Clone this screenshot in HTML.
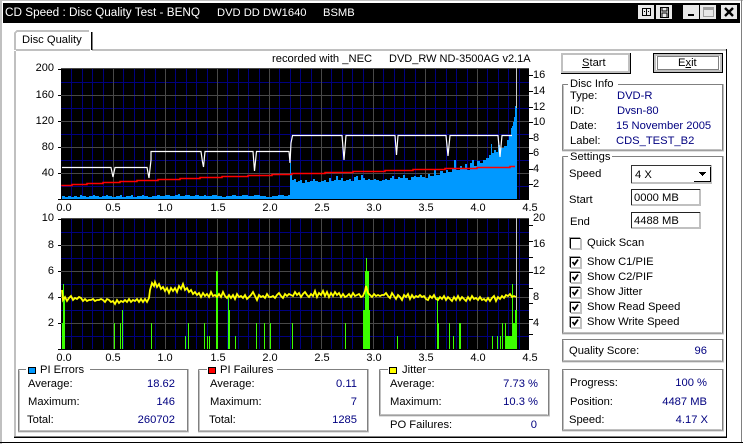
<!DOCTYPE html>
<html><head><meta charset="utf-8"><style>
html,body{margin:0;padding:0;background:#fff}
#w{position:relative;width:743px;height:444px;overflow:hidden;background:#fff;font:11.2px/14px "Liberation Sans",sans-serif;color:#000}
svg{position:absolute;left:0;top:0}
.t{position:absolute;white-space:nowrap}
.r{position:absolute;white-space:nowrap;text-align:right}
.b{color:#000080}
.a{font-size:11px;width:30px;text-align:center;position:absolute}
.l{font-size:11px;width:24px;text-align:right;position:absolute;left:30px}
.ck{position:absolute;left:570px;width:9px;height:9px;border:1px solid #000;border-right-color:#c0c0c0;border-bottom-color:#c0c0c0;box-shadow:-1px -1px 0 #a0a0a0,1px 1px 0 #c0c0c0;background:#fff}
</style></head><body><div id="w">
<svg width="743" height="444" shape-rendering="crispEdges">
<defs><g id="gr" fill="none">
<path stroke="#000080" d="M61 82.5H529M61 108.5H529M61 134.5H529M61 160.5H529M61 186.5H529M71.5 68V199M82.5 68V199M92.5 68V199M103.5 68V199M123.5 68V199M134.5 68V199M144.5 68V199M155.5 68V199M175.5 68V199M186.5 68V199M196.5 68V199M207.5 68V199M227.5 68V199M238.5 68V199M248.5 68V199M259.5 68V199M279.5 68V199M290.5 68V199M300.5 68V199M311.5 68V199M331.5 68V199M342.5 68V199M352.5 68V199M363.5 68V199M383.5 68V199M394.5 68V199M404.5 68V199M415.5 68V199M435.5 68V199M446.5 68V199M456.5 68V199M467.5 68V199M487.5 68V199M498.5 68V199M508.5 68V199M519.5 68V199"/>
<path stroke="#484848" d="M61 68.5H529M61 95.5H529M61 121.5H529M61 147.5H529M61 173.5H529M113.5 68V199M165.5 68V199M217.5 68V199M269.5 68V199M321.5 68V199M373.5 68V199M425.5 68V199M477.5 68V199"/>
<path stroke="#000" d="M58 69.5H61M58 95.5H61M58 121.5H61M58 147.5H61M58 173.5H61M58 199.5H61M529 75.5H533M529 91.5H533M529 107.5H533M529 122.5H533M529 138.5H533M529 153.5H533M529 169.5H533M529 184.5H533"/>
</g></defs>
<!-- window frame -->
<rect x="0" y="0" width="743" height="1" fill="#c0c0c0"/>
<rect x="0" y="0" width="2" height="444" fill="#c0c0c0"/>
<rect x="741" y="0" width="1" height="443" fill="#808080"/>
<rect x="3" y="3" width="737" height="20" fill="#000"/>
<rect x="0" y="442" width="743" height="1" fill="#000"/>
<!-- title buttons -->
<rect x="638" y="5" width="16" height="14" fill="#e8e8e8"/><rect x="656" y="5" width="16" height="14" fill="#e8e8e8"/>
<rect x="683" y="5" width="16" height="14" fill="#e8e8e8"/><rect x="700" y="5" width="16" height="14" fill="#e8e8e8"/><rect x="721" y="5" width="16" height="14" fill="#e8e8e8"/>
<path d="M642 8.5H650M642 15.5H650M642.5 8V16M646.5 8V16M650.5 8V16M644 11.5H645M648 11.5H649M660.5 7.5H668.5V17.5H660.5ZM662 8V11H667V8M662 17V13H667V17" fill="none" stroke="#000"/>
<rect x="688" y="14" width="6" height="2" fill="#000"/>
<rect x="703.5" y="7.5" width="10" height="9" fill="#e8e8e8" stroke="#a0a0a0"/><rect x="704" y="8" width="9" height="2" fill="#a0a0a0"/>
<path d="M725 8L733 16M733 8L725 16" stroke="#000" stroke-width="2.4" shape-rendering="auto"/>
<!-- tab page -->
<path d="M15 51V437" stroke="#c0c0c0" stroke-width="2" />
<path d="M16 50H90M92 50H726" stroke="#c0c0c0" stroke-width="2"/>
<path d="M726.5 49V437" stroke="#000" /><path d="M14 437.5H727" stroke="#000"/><path d="M14 436.5H726" stroke="#808080"/>
<path d="M15 50V33L17 31H89" fill="none" stroke="#c0c0c0" stroke-width="2"/>
<path d="M91.5 32V50" stroke="#000" stroke-width="1.5"/>
<!-- charts -->
<rect x="61" y="68" width="468" height="132" fill="#000"/>
<rect x="61" y="218" width="468" height="132" fill="#000"/>
<use href="#gr"/><use href="#gr" y="150"/>
<!-- chart 1 blue -->
<path fill="#0099ff" d="M62 199V196H65V197H68V196H71V197H74V196H77V197H80V195H82V196H86V197H89V196H93V195H95V196H99V197H102V196H106V195H108V196H112V197H116V196H120V195H122V197H126V196H131V195H133V197H137V196H142V195H144V196H148V197H152V196H157V195H160V196H165V195H170V196H175V195H178V194H180V196H185V195H190V196H195V195H199V196H204V195H206V196H212V195H217V196H222V197H226V196H232V195H236V196H242V195H248V196H254V195H260V196H266V197H272V196H278V195H284V196H288V195H290V163H291V173H292V180H294V179H296V182H298V181H300V180H302V183H305V180H307V182H310V181H313V179H315V181H318V182H321V181H324V180H326V182H329V178H331V181H334V180H336V176H338V180H341V178H343V181H346V180H349V179H351V181H354V177H356V176H358V180H361V175H363V178H365V180H368V179H370V180H374V179H376V180H379V181H382V180H385V179H387V180H390V178H392V176H394V179H398V177H400V178H403V175H405V178H408V180H411V177H414V176H416V177H420V175H422V177H425V178H428V174H430V176H434V170H436V175H440V171H443V173H446V170H448V172H452V169H454V160H456V170H460V166H462V168H465V164H467V170H470V163H472V160H474V166H477V161H480V163H483V160H486V158H489V155H491V144H492V153H494V150H496V152H498V145H500V148H502V148H504V146H507V140H509V136H511V128H512V126H513V122H514V117H515V106H516V99H517V199Z"/>
<!-- white -->
<path fill="none" stroke="#fff" shape-rendering="auto" stroke-width="1.2" d="M62 167.5H111L113 177L115 167.5H147L149 178L151 160V151.5H201L202.5 162L203.5 167L205 151.5H253L254.5 171L256.5 151.5H289L290 163L291 143L292.5 135.5H342L344 160L346 135.5H395L396.5 155L398 135.5H446L448 156L450 135.5H498L500 157L502 135.5H512"/>
<path stroke="#c8c8c8" d="M516.5 68V108"/>
<!-- red -->
<path fill="none" stroke="#ff0000" stroke-width="1.5" shape-rendering="auto" d="M62 186V185.5H72V184.5H87V183.5H103V182.5H120V181.5H137V180.5H158V179.5H180V178.5H200V177.5H222V176.5H248V175.5H272V174.5H292V173.5H325V172.5H353V171.5H385V170.5H413V169.5H445V168.5H477V167.5H510V166.5H515"/>
<!-- chart 2 green -->
<path fill="#3cff00" d="M62 349V323H63V284H64V297H65V349ZM114 349V323H115V349ZM120 349V323H121V349ZM122 349V310H123V349ZM151 349V323H152V349ZM185 349V336H186V349ZM188 349V323H189V349ZM204 349V323H205V349ZM207 349V336H208V349ZM209 349V336H210V349ZM216 349V271H218V349ZM228 349V297H229V310H230V349ZM235 349V336H236V349ZM256 349V323H257V349ZM264 349V323H265V349ZM270 349V323H271V349ZM292 349V323H293V349ZM345 349V323H346V349ZM363 349V310H365V271H366V258H367V271H369V310H370V349ZM397 349V336H398V349ZM437 349V297H438V323H439V349ZM449 349V323H450V349ZM453 349V336H454V349ZM459 349V323H461V349ZM492 349V336H493V349ZM497 349V336H498V349ZM500 349V336H501V349ZM502 349V323H503V349ZM505 349V323H506V336H512V284H513V323H515V310H516V271H517V349Z"/>
<path stroke="#c8c8c8" d="M516.5 218V310"/>
<!-- yellow -->
<path fill="none" stroke="#ffff00" stroke-width="1.8" shape-rendering="auto" d="M62 290L63 300L65 297L67 301L69 298L71 296L73 300L75 298L77 299L79 297L81 298L83 301L85 299L87 301L89 300L91 300L93 299L95 301L97 300L99 300L101 299L103 300L105 302L107 299L109 300L111 302L113 301L115 304L117 300L119 303L121 301L123 302L125 300L127 302L129 299L131 302L133 300L135 301L137 299L139 302L141 299L143 302L145 299L147 302L149 298L150 290L152 283L154 286L155 282L157 287L159 284L161 289L163 287L165 291L167 288L169 293L171 288L173 291L175 288L177 292L179 286L181 289L183 284L185 290L187 288L189 292L191 290L193 294L195 292L197 295L199 293L201 297L203 293L205 296L207 294L209 297L211 292L213 296L215 295L217 297L219 294L221 297L223 292L225 296L227 298L229 295L231 298L233 295L235 299L237 294L239 297L241 296L243 298L245 295L247 299L249 297L251 295L253 292L255 296L257 300L259 295L261 297L263 296L265 298L267 294L269 297L271 297L273 296L275 298L277 295L279 293L281 296L283 298L285 294L287 296L289 294L291 295L293 296L295 292L297 295L299 293L301 297L303 294L305 292L307 295L309 297L311 294L313 296L315 291L317 297L319 293L321 295L323 291L325 296L327 292L329 297L331 293L333 296L335 292L337 295L339 293L341 297L343 294L345 297L347 296L349 294L351 297L353 293L355 296L357 295L359 294L361 297L363 296L365 291L366 286L368 293L370 295L372 297L374 294L376 296L378 295L380 296L382 295L384 295L386 293L388 296L390 298L392 293L394 296L396 299L398 295L400 297L402 300L404 295L406 297L408 294L410 299L412 295L414 298L416 296L418 297L420 295L422 297L424 296L426 299L428 300L430 296L432 298L434 295L436 299L438 300L440 297L442 299L444 296L446 300L448 297L450 299L452 301L454 297L456 300L458 296L460 300L462 297L464 299L466 301L468 297L470 300L472 296L474 299L476 298L478 300L480 297L482 300L484 299L486 301L488 298L490 301L492 298L494 296L496 301L498 297L500 299L502 296L504 298L506 295L508 296L510 294L512 297L514 296L516 297"/>
<!-- group boxes -->
<g fill="none" stroke-width="1">
<path stroke="#808080" d="M562.5 84.5V150.5H722.5V84.5H618M568 84.5H562.5M562.5 156.5V333.5H722.5V156.5H612M568 156.5H562.5M562.5 339.5H722.5V361.5H562.5ZM562.5 369.5H722.5V430.5H562.5ZM18.5 369.5V431.5H187.5V369.5H90M26 369.5H18.5M198.5 369.5V431.5H367.5V369.5H277M207 369.5H198.5M379.5 369.5V415.5H548.5V369.5H428M388 369.5H379.5"/>
<path stroke="#c0c0c0" d="M563.5 85.5V149.5H721.5M563.5 157.5V332.5H721.5M563.5 340.5V360.5H721.5M563.5 370.5V429.5H721.5M19.5 370.5V430.5H186.5M199.5 370.5V430.5H366.5M380.5 370.5V414.5H547.5M723.5 84V151H562M723.5 156V334H562M723.5 339V362H562M723.5 369V431H562M188.5 369V432H18M368.5 369V432H198M549.5 369V416H379"/>
</g>
<!-- buttons -->
<rect x="561" y="53" width="69" height="20" fill="#c0c0c0"/><rect x="563" y="55" width="65" height="16" fill="#fff"/>
<path d="M561 73.5H630.5V53" fill="none" stroke="#000"/>
<rect x="653" y="53" width="70" height="20" fill="#000"/><rect x="654" y="54" width="68" height="18" fill="#c0c0c0"/><rect x="656" y="56" width="64" height="14" fill="#fff"/>
<path d="M655 72.5H722.5V54" fill="none" stroke="#000" stroke-width="1"/>
<rect x="657.5" y="56.5" width="61" height="13" fill="none" stroke="#000" stroke-dasharray="1 1"/>
<!-- combo & inputs -->
<rect x="631" y="165" width="81" height="19" fill="#c0c0c0"/><rect x="632" y="166" width="78" height="16" fill="#fff"/>
<path d="M631.5 183V165.5H711" fill="none" stroke="#333"/>
<rect x="694" y="167" width="17" height="15" fill="#fff"/><path d="M694 181.5H710.5V167" fill="none" stroke="#000" stroke-width="1"/>
<path d="M699 172.5H706M700 173.5H705M701 174.5H704M702 175.5H703" stroke="#000"/>
<rect x="631" y="189" width="70" height="17" fill="#c0c0c0"/><rect x="632" y="190" width="67" height="14" fill="#fff"/><path d="M631.5 205V189.5H700" fill="none" stroke="#222"/>
<rect x="631" y="212" width="70" height="17" fill="#c0c0c0"/><rect x="632" y="213" width="67" height="14" fill="#fff"/><path d="M631.5 228V212.5H700" fill="none" stroke="#222"/>
<!-- legend icons -->
<rect x="28.5" y="367.5" width="7" height="6" fill="#0099ff" stroke="#000"/>
<rect x="208.5" y="367.5" width="7" height="6" fill="#ff0000" stroke="#000"/>
<rect x="389.5" y="367.5" width="7" height="6" fill="#ffff00" stroke="#000"/>
</svg>
<div class="t" style="left:5px;top:6px;color:#fff;font-size:11.75px">CD Speed : Disc Quality Test - BENQ</div>
<div class="t" style="left:217px;top:6px;color:#fff;font-size:11.2px">DVD DD DW1640</div>
<div class="t" style="left:323px;top:6px;color:#fff;font-size:11.2px">BSMB</div>
<div class="t" style="left:22px;top:33px">Disc Quality</div>
<div class="t" style="left:272px;top:52px">recorded with _NEC</div>
<div class="t" style="left:389px;top:52px;font-size:11px">DVD_RW ND-3500AG v2.1A</div>
<div class="t" style="left:582px;top:56px"><u>S</u>tart</div>
<div class="t" style="left:678px;top:56px">E<u>x</u>it</div>
<div class="l" style="top:61px">200</div><div class="l" style="top:88px">160</div><div class="l" style="top:114px">120</div><div class="l" style="top:140px">80</div><div class="l" style="top:166px">40</div>
<div class="l" style="top:211px">10</div><div class="l" style="top:238px">8</div><div class="l" style="top:264px">6</div><div class="l" style="top:290px">4</div><div class="l" style="top:316px">2</div>
<div class="t" style="left:533px;top:68px;font-size:11px">16</div><div class="t" style="left:533px;top:84px;font-size:11px">14</div><div class="t" style="left:533px;top:100px;font-size:11px">12</div><div class="t" style="left:533px;top:115px;font-size:11px">10</div><div class="t" style="left:533px;top:131px;font-size:11px">8</div><div class="t" style="left:533px;top:146px;font-size:11px">6</div><div class="t" style="left:533px;top:162px;font-size:11px">4</div><div class="t" style="left:533px;top:177px;font-size:11px">2</div>
<div class="t" style="left:533px;top:211px;font-size:11px">20</div><div class="t" style="left:533px;top:237px;font-size:11px">16</div><div class="t" style="left:533px;top:264px;font-size:11px">12</div><div class="t" style="left:533px;top:290px;font-size:11px">8</div><div class="t" style="left:533px;top:316px;font-size:11px">4</div>
<div class="a" style="left:49px;top:201px">0.0</div><div class="a" style="left:98px;top:201px">0.5</div><div class="a" style="left:150px;top:201px">1.0</div><div class="a" style="left:203px;top:201px">1.5</div><div class="a" style="left:255px;top:201px">2.0</div><div class="a" style="left:307px;top:201px">2.5</div><div class="a" style="left:359px;top:201px">3.0</div><div class="a" style="left:411px;top:201px">3.5</div><div class="a" style="left:463px;top:201px">4.0</div><div class="a" style="left:515px;top:201px">4.5</div>
<div class="a" style="left:49px;top:351px">0.0</div><div class="a" style="left:98px;top:351px">0.5</div><div class="a" style="left:150px;top:351px">1.0</div><div class="a" style="left:203px;top:351px">1.5</div><div class="a" style="left:255px;top:351px">2.0</div><div class="a" style="left:307px;top:351px">2.5</div><div class="a" style="left:359px;top:351px">3.0</div><div class="a" style="left:411px;top:351px">3.5</div><div class="a" style="left:463px;top:351px">4.0</div><div class="a" style="left:515px;top:351px">4.5</div>
<div class="t" style="left:570px;top:77px">Disc Info</div>
<div class="t" style="left:570px;top:89px">Type:</div><div class="t b" style="left:617px;top:89px">DVD-R</div>
<div class="t" style="left:570px;top:104px">ID:</div><div class="t b" style="left:617px;top:104px">Dvsn-80</div>
<div class="t" style="left:570px;top:119px">Date:</div><div class="t b" style="left:616px;top:119px">15 November 2005</div>
<div class="t" style="left:570px;top:134px">Label:</div><div class="t b" style="left:616px;top:134px">CDS_TEST_B2</div>
<div class="t" style="left:570px;top:150px">Settings</div>
<div class="t" style="left:569px;top:167px">Speed</div><div class="t" style="left:635px;top:168px">4 X</div>
<div class="t" style="left:569px;top:193px">Start</div><div class="t" style="left:634px;top:191px">0000 MB</div>
<div class="t" style="left:570px;top:215px">End</div><div class="t" style="left:634px;top:214px">4488 MB</div>
<div class="ck" style="top:238px"></div><div class="t" style="left:587px;top:236px">Quick Scan</div>
<div class="ck" style="top:257px"></div><div class="t" style="left:587px;top:255px">Show C1/PIE</div>
<div class="ck" style="top:272px"></div><div class="t" style="left:587px;top:270px">Show C2/PIF</div>
<div class="ck" style="top:287px"></div><div class="t" style="left:587px;top:285px">Show Jitter</div>
<div class="ck" style="top:302px"></div><div class="t" style="left:587px;top:300px">Show Read Speed</div>
<div class="ck" style="top:317px"></div><div class="t" style="left:587px;top:315px">Show Write Speed</div>
<svg width="743" height="444" style="pointer-events:none">
<g fill="none" stroke="#000" stroke-width="1.8">
<path d="M572.5 262L574.5 264.5L578 259.5"/><path d="M572.5 277L574.5 279.5L578 274.5"/><path d="M572.5 292L574.5 294.5L578 289.5"/><path d="M572.5 307L574.5 309.5L578 304.5"/><path d="M572.5 322L574.5 324.5L578 319.5"/>
</g></svg>
<div class="t" style="left:569px;top:344px">Quality Score:</div><div class="r b" style="right:36px;top:344px">96</div>
<div class="t" style="left:570px;top:376px">Progress:</div><div class="r b" style="right:36px;top:376px">100 %</div>
<div class="t" style="left:570px;top:395px">Position:</div><div class="r b" style="right:36px;top:395px">4487 MB</div>
<div class="t" style="left:569px;top:413px">Speed:</div><div class="r b" style="right:35px;top:413px">4.17 X</div>
<div class="t" style="left:40px;top:363px">PI Errors</div>
<div class="t" style="left:28px;top:377px">Average:</div><div class="r b" style="right:568px;top:377px">18.62</div>
<div class="t" style="left:28px;top:395px">Maximum:</div><div class="r b" style="right:568px;top:395px">146</div>
<div class="t" style="left:27px;top:413px">Total:</div><div class="r b" style="right:568px;top:413px">260702</div>
<div class="t" style="left:220px;top:363px">PI Failures</div>
<div class="t" style="left:210px;top:377px">Average:</div><div class="r b" style="right:386px;top:377px">0.11</div>
<div class="t" style="left:210px;top:395px">Maximum:</div><div class="r b" style="right:386px;top:395px">7</div>
<div class="t" style="left:209px;top:413px">Total:</div><div class="r b" style="right:386px;top:413px">1285</div>
<div class="t" style="left:402px;top:363px">Jitter</div>
<div class="t" style="left:390px;top:377px">Average:</div><div class="r b" style="right:205px;top:377px">7.73 %</div>
<div class="t" style="left:390px;top:395px">Maximum:</div><div class="r b" style="right:205px;top:395px">10.3 %</div>
<div class="t" style="left:390px;top:418px">PO Failures:</div><div class="r b" style="right:206px;top:418px">0</div>
</div></body></html>
